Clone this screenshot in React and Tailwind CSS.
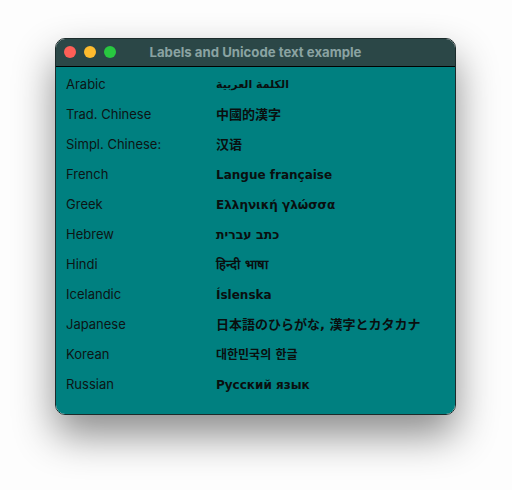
const rows = [
  ["Arabic", "الكلمة العربية", "text-[11px]"],
  ["Trad. Chinese", "中國的漢字", "text-[13px]"],
  ["Simpl. Chinese:", "汉语", "text-[13px]"],
  ["French", "Langue française", "text-[12px]"],
  ["Greek", "Ελληνική γλώσσα", "text-[12px]"],
  ["Hebrew", "כתב עברית", "text-[12.5px]"],
  ["Hindi", "हिन्दी भाषा", "text-[13px]"],
  ["Icelandic", "Íslenska", "text-[12px]"],
  ["Japanese", "日本語のひらがな, 漢字とカタカナ", "text-[13px]"],
  ["Korean", "대한민국의 한글", "text-[12px]"],
  ["Russian", "Русский язык", "text-[12px]"],
];

export default function App() {
  return (
    <div className="flex h-[490px] w-[512px] items-start justify-center bg-[#fdfdfd] pt-[38px]">
      <div className="ml-[-1px] flex h-[377px] w-[401px] flex-col overflow-hidden rounded-[10px] border border-[#1c2b2b] shadow-[0_20px_40px_rgba(0,0,0,0.45)]">
        <div className="relative flex h-[28px] shrink-0 items-center justify-center border-b border-black bg-[#2b4747]">
          <div className="absolute left-[8px] top-[7px] flex gap-[8px]">
            <span className="h-[12px] w-[12px] rounded-full bg-[#fe5f57]" />
            <span className="h-[12px] w-[12px] rounded-full bg-[#febc2e]" />
            <span className="h-[12px] w-[12px] rounded-full bg-[#28c840]" />
          </div>
          <span className="font-['Inter',sans-serif] text-[13.2px] font-bold text-[#8aa3a2]">
            Labels and Unicode text example
          </span>
        </div>
        <div className="flex flex-1 flex-col bg-[#008080] pt-[3px] pl-[10px]">
          {rows.map(([label, value, size]) => (
            <div key={label} className="flex h-[30px] items-center">
              <span className="w-[150px] shrink-0 font-['Inter',sans-serif] text-[13px] text-[#0d1414]">
                {label}
              </span>
              <span className={`font-['DejaVu_Sans','Noto_Sans_CJK_JP',sans-serif] font-bold text-[#0a0f0f] ${size}`}>
                {value}
              </span>
            </div>
          ))}
        </div>
      </div>
    </div>
  );
}
